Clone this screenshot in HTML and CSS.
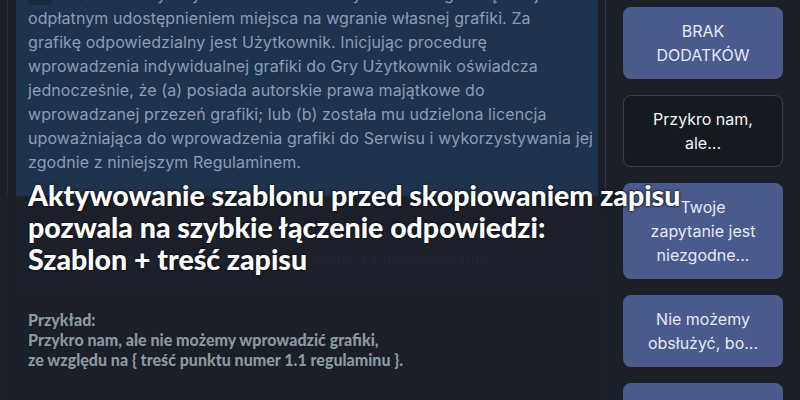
FILE: index.html
```html
<!DOCTYPE html>
<html lang="pl">
<head>
<meta charset="utf-8">
<title>Regulamin – szablony</title>
<link rel="stylesheet" href="styles.css">
</head>
<body>
<div class="page">
  <main class="main">
    <div class="rail">
      <section class="doc">
        <p class="para"><span class="badge"></span> W ramach Gry Użytkownik może skorzystać z usługi związanej z<br>odpłatnym udostępnieniem miejsca na wgranie własnej grafiki. Za<br>grafikę odpowiedzialny jest Użytkownik. Inicjując procedurę<br>wprowadzenia indywidualnej grafiki do Gry Użytkownik oświadcza<br>jednocześnie, że (a) posiada autorskie prawa majątkowe do<br>wprowadzanej przezeń grafiki; lub (b) została mu udzielona licencja<br>upoważniająca do wprowadzenia grafiki do Serwisu i wykorzystywania jej<br>zgodnie z niniejszym Regulaminem.</p>
        <p class="para">2. Z chwilą zakupu usługi Użytkownik otrzymuje udostępnienie<br>miejsca, a Użytkownik jest odpowiedzialny za dostosowanie</p>
      </section>
    </div>
    <div class="tip">
      <h1 class="tip-title">Aktywowanie szablonu przed skopiowaniem zapisu<br>pozwala na szybkie łączenie odpowiedzi:<br>Szablon + treść zapisu</h1>
      <p class="tip-example">Przykład:<br>Przykro nam, ale nie możemy wprowadzić grafiki,<br>ze względu na { treść punktu numer 1.1 regulaminu }.</p>
    </div>
  </main>
  <aside class="side">
    <button class="tpl">BRAK<br>DODATKÓW</button>
    <button class="tpl tpl-dark">Przykro nam,<br>ale...</button>
    <button class="tpl">Twoje<br>zapytanie jest<br>niezgodne...</button>
    <button class="tpl">Nie możemy<br>obsłużyć, bo...</button>
    <button class="tpl">Zgłoszenie<br>odrzucone</button>
  </aside>
</div>
</body>
</html>
```
FILE: styles.css
```css
html, body {
  margin: 0;
  padding: 0;
}
body {
  background: #1b1f28;
  font-family: "Inter", "Noto Sans", sans-serif;
  width: 800px;
  height: 400px;
  overflow: hidden;
}
.page {
  display: grid;
  grid-template-columns: 606px 1fr;
  height: 400px;
  overflow: hidden;
}
.main {
  position: relative;
  border-right: 1px solid #2f3440;
  padding: 0 7px 0 7px;
  overflow: visible;
  z-index: 2;
}
.rail {
  border-left: 1px solid #262b36;
  padding-left: 8px;
  height: 100%;
}
.doc {
  background: #1e334d;
  margin-top: -30px;
  padding: 12px 12px 20px 12px;
  color: #8c9db6;
  font-size: 16px;
  letter-spacing: 0.1px;
  line-height: 24px;
  white-space: nowrap;
}
.para {
  margin: 0 0 48px 0;
}
.para:last-child {
  margin-bottom: 0;
}
.badge {
  display: inline-block;
  width: 24px;
  height: 18px;
  border-radius: 3px;
  background: #172a40;
  vertical-align: middle;
}
.tip {
  position: absolute;
  left: 0;
  top: 179px;
  width: 606px;
  bottom: 0;
  padding: 0 0 0 28px;
  box-sizing: border-box;
  background: linear-gradient(to bottom, rgba(27, 31, 40, 0) 0, rgba(27, 31, 40, 0) 16px, rgba(27, 31, 40, 0.955) 18px);
}
.tip-title {
  margin: 0;
  font-family: "Lato", sans-serif;
  font-weight: 900;
  font-size: 28.5px;
  line-height: 32px;
  color: #ffffff;
  white-space: nowrap;
  text-shadow: 0 0 2px #11151c, 0 0 3px #11151c;
}
.tip-example {
  margin: 35px 0 0 0;
  font-family: "Lato", sans-serif;
  font-weight: 900;
  font-size: 16px;
  line-height: 20px;
  color: #8a999d;
  white-space: nowrap;
}
.side {
  display: flex;
  flex-direction: column;
  gap: 16px;
  padding: 7px 16px 0 17px;
  position: relative;
  z-index: 1;
}
.tpl {
  width: 160px;
  flex: none;
  box-sizing: border-box;
  border: 1px solid transparent;
  border-radius: 8px;
  background: #4a5a8c;
  color: #e4e9f4;
  font-family: "Inter", "Noto Sans", sans-serif;
  font-size: 16px;
  line-height: 24px;
  padding: 11px 4px;
  text-align: center;
}
.tpl-dark {
  background: #151920;
  border-color: #3a3f4b;
  color: #f2f4f8;
}
```
